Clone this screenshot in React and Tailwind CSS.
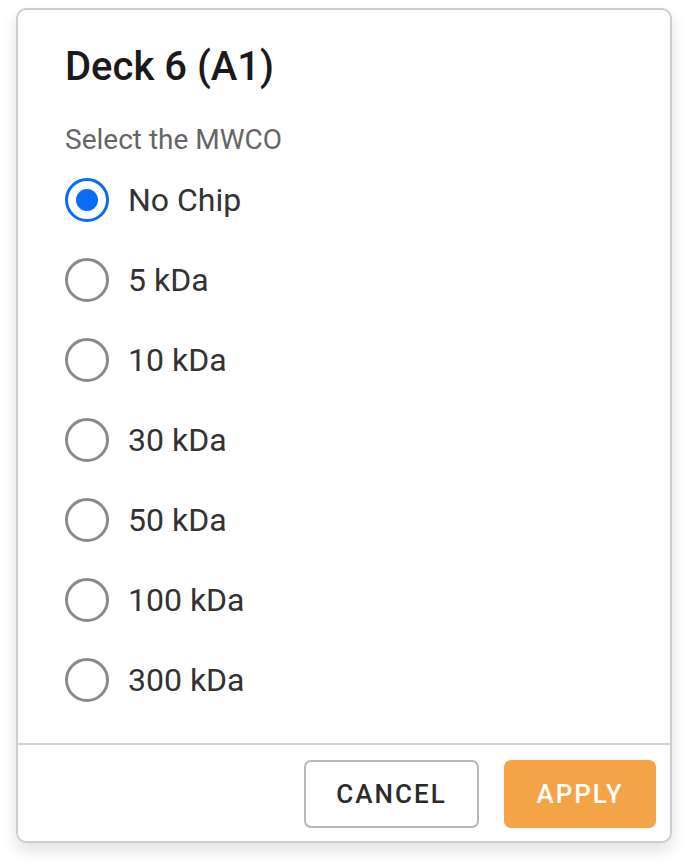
import React, { useState } from 'react';

const options = ['No Chip', '5 kDa', '10 kDa', '30 kDa', '50 kDa', '100 kDa', '300 kDa'];

const Radio = ({ checked }) => (
  <span
    className={`flex items-center justify-center w-[44px] h-[44px] rounded-full border-[3px] ${
      checked ? 'border-[#0a6cf5]' : 'border-[#8a8a8a]'
    }`}
  >
    {checked && <span className="w-[22px] h-[22px] rounded-full bg-[#0a6cf5]" />}
  </span>
);

const App = () => {
  const [selected, setSelected] = useState('No Chip');

  return (
    <div className="min-h-screen bg-white pt-[8px] pl-[16px] font-['Roboto',sans-serif]">
      <div className="w-[656px] h-[835px] flex flex-col rounded-[10px] border-2 border-[#cdcdcd] bg-white shadow-[0_8px_16px_rgba(0,0,0,0.12)]">
        <div className="flex-1 pl-[47px] pt-[35px]">
          <h1 className="text-[40px] leading-[44px] font-medium text-[#1a1a1a]">Deck 6 (A1)</h1>
          <p className="mt-[35px] text-[28px] leading-[32px] text-[#666666]">Select the MWCO</p>
          <div className="mt-[4px] flex flex-col">
            {options.map((opt) => (
              <label
                key={opt}
                onClick={() => setSelected(opt)}
                className="flex items-center h-[80px] cursor-pointer"
              >
                <Radio checked={selected === opt} />
                <span className="ml-[19px] text-[32px] text-[#333333]">{opt}</span>
              </label>
            ))}
          </div>
        </div>

        {/* Footer */}
        <div className="border-t-2 border-[#d4d4d4] flex justify-end gap-[25px] pt-[15px] pb-[13px] pr-[14px]">
          <button className="w-[175px] h-[68px] rounded-[7px] border-2 border-[#b8b8b8] text-[26px] font-medium tracking-[2px] text-[#2b2b2b]">
            CANCEL
          </button>
          <button className="w-[152px] h-[68px] rounded-[7px] bg-[#f5a347] text-[26px] font-medium tracking-[2px] text-white">
            APPLY
          </button>
        </div>
      </div>
    </div>
  );
};

export default App;
